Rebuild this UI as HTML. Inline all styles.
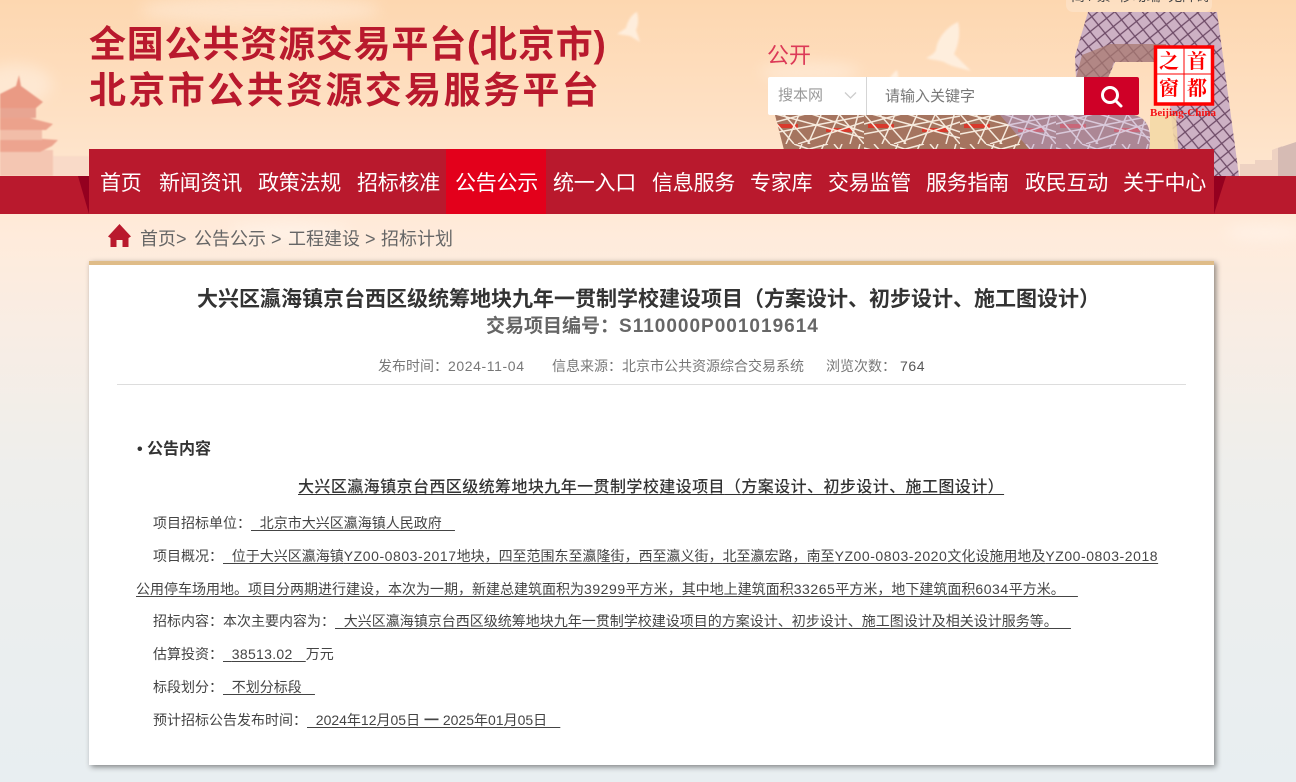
<!DOCTYPE html>
<html lang="zh-CN">
<head>
<meta charset="utf-8">
<title>公告公示</title>
<style>
html,body{margin:0;padding:0;}
body{width:1296px;height:782px;overflow:hidden;position:relative;font-family:"Liberation Sans","Noto Sans CJK SC",sans-serif;background:#e9eef1;text-spacing-trim:space-all;}
.a{position:absolute;white-space:nowrap;}
svg.bg{position:absolute;left:0;top:0;}
.t{font-weight:700;font-size:37px;line-height:44px;color:#b9192d;}
.n{top:169px;font-size:21px;line-height:30px;color:#fff;letter-spacing:-0.25px;}
.l{font-size:14px;line-height:20px;color:#444;}
.l u,.u{text-underline-offset:2px;}
.l u{word-spacing:.5px;}
.d{letter-spacing:.55px;}
i{font-style:normal;font-family:"Noto Sans CJK TC",sans-serif;line-height:0;}
i.w{font-family:"WenQuanYi Zen Hei",sans-serif;}
.logo{font-weight:700;color:#fe0000;font-size:20px;line-height:24px;font-family:"Liberation Serif","Noto Serif CJK SC",serif;}
</style>
</head>
<body>
<svg class="bg" width="1296" height="782" viewBox="0 0 1296 782">
<defs>
<linearGradient id="g" x1="0" y1="0" x2="0" y2="1">
<stop offset="0" stop-color="#fdd7b0"/>
<stop offset=".14" stop-color="#fee0c3"/>
<stop offset=".3" stop-color="#ffebdb"/>
<stop offset=".42" stop-color="#f8ede4"/>
<stop offset=".6" stop-color="#eeeeec"/>
<stop offset="1" stop-color="#e8eef1"/>
</linearGradient>
<filter id="b"><feGaussianBlur stdDeviation="7"/></filter>
<filter id="s"><feGaussianBlur stdDeviation=".7"/></filter>
<filter id="s2"><feGaussianBlur stdDeviation="1"/></filter>
<pattern id="lat" width="15" height="15" patternUnits="userSpaceOnUse" patternTransform="rotate(6)">
<rect width="15" height="15" fill="#cdb1c4"/>
<path d="M0 0L15 15M15 0L0 15" stroke="#6d4a66" stroke-width="1.3"/>
</pattern>
<pattern id="nest" width="96" height="36" patternUnits="userSpaceOnUse">
<rect width="96" height="36" fill="#a5745f"/>
<path d="M4 18H30M58 22H84" stroke="#d8392c" stroke-width="4"/>
<path d="M0 6L26 36M10 0L42 36M34 0L18 36M56 0L40 36M74 0L58 36M92 0L82 36M0 26L96 8M0 4L96 30M26 0L96 24M0 16L60 0M30 36L96 14M66 0L96 36" stroke="#f6eadd" stroke-width="1.5" fill="none"/>
</pattern>
</defs>
<rect width="1296" height="782" fill="url(#g)"/>
<g filter="url(#b)" fill="#fff" opacity=".3">
<ellipse cx="260" cy="10" rx="120" ry="14"/>
<ellipse cx="810" cy="72" rx="50" ry="10"/>
<ellipse cx="16" cy="84" rx="36" ry="20"/>
<ellipse cx="290" cy="232" rx="60" ry="10"/>
<ellipse cx="1265" cy="232" rx="40" ry="8"/>
</g>
<!-- temple -->
<g filter="url(#s)">
<rect x="53" y="156" width="36" height="20" fill="#f9dac8"/>
<rect x="0" y="150" width="53" height="26" fill="#f4c6b2"/>
<path d="M0 138H30L58 140L52 146L40 152H0Z" fill="#eda48f"/>
<rect x="0" y="128" width="42" height="12" fill="#f2bda8"/>
<path d="M0 116H22L53 124L46 130H0Z" fill="#eca28c"/>
<rect x="0" y="104" width="36" height="14" fill="#e8a592"/>
<path d="M19 75L21 86L43 102L36 108H0V94L16 86Z" fill="#ea9a84"/>
</g>
<!-- cctv -->
<path d="M1088 12H1217L1239 176H1178L1165 62H1115L1108 78H1076L1075 56Z" fill="url(#lat)"/>
<path d="M1082 55L1110 44H1166V62H1114L1108 78H1076Z" fill="#a87a70" opacity=".75"/>
<path d="M1150 115H1176L1180 176H1150Z" fill="#f3d8a4" opacity=".85"/>
<!-- buildings -->
<path d="M1240 176V164H1255V160H1272V150L1282 146V176Z" fill="#eed2c2"/>
<path d="M1278 148L1296 142V176H1278Z" fill="#d6bbb4"/>
<!-- nest -->
<path d="M775 115H1134C1148 118 1152 130 1149 150H784Z" fill="url(#nest)"/>
<path d="M1000 115H1134C1148 118 1152 130 1149 150H1030Z" fill="#b5a0d8" opacity=".45"/>
<!-- birds -->
<g fill="#fff3e6" opacity=".8" filter="url(#s2)">
<path d="M936 50C937 38 948 26 958 22C961 34 958 46 954 54C962 62 966 66 971 71C960 68 950 66 944 62C938 60 932 60 926 58C930 56 934 54 936 50Z"/>
<path d="M888 84C889 78 892 74 897 70C899 76 898 80 897 83L899 90L892 86L884 85Z"/>
<path d="M626 28C628 20 632 14 637 12C639 20 638 26 636 30L640 42L630 36L617 34Z"/>
</g>
<!-- band -->
<rect x="0" y="176" width="1296" height="38" fill="#b9192d"/>
<path d="M78 176H89V214Z" fill="#94001f"/>
<path d="M1214 176H1226L1214 214Z" fill="#94001f"/>
<rect x="89" y="149" width="1125" height="65" fill="#b9192d"/>
<rect x="446" y="149" width="100" height="65" fill="#e3001b"/>
<!-- top util -->
<rect x="1066" y="-8" width="146" height="20" rx="7" fill="#fff" opacity=".22"/>
<!-- card -->
<rect x="89" y="261" width="1125" height="504" fill="#fff" style="filter:drop-shadow(2px 2px 3px rgba(0,0,0,.45))"/>
<rect x="89" y="261" width="1125" height="4" fill="#dfbc88"/>
<rect x="117" y="384" width="1069" height="1" fill="#ddd"/>
<!-- logo -->
<rect x="1155.500" y="47" width="57" height="57" fill="#fff" stroke="#fe0000" stroke-width="3.500"/>
<path d="M1184 47V104M1156 74H1212" stroke="#fe0000" stroke-width="1" fill="none"/>
<!-- home -->
<path d="M119.500 224L131 236.500L128.500 238V247H122.500V240H116.500V247H110.500V238L108 236.500Z" fill="#b9192d"/>
<!-- search -->
<rect x="768" y="77" width="371" height="38" rx="2" fill="#fff"/>
<rect x="866" y="77" width="1" height="38" fill="#d5d5d5"/>
<path d="M1084 77H1137a2 2 0 0 1 2 2V113a2 2 0 0 1-2 2H1084Z" fill="#cf0027"/>
<circle cx="1110" cy="95" r="7.500" fill="none" stroke="#fff" stroke-width="3"/>
<path d="M1115.500 100.500L1121 106" stroke="#fff" stroke-width="3" stroke-linecap="round"/>
<path d="M845 92.500L850.500 98L856 92.500" fill="none" stroke="#ccc" stroke-width="1.300"/>
</svg>

<div class="a" style="left:1071px;top:-14px;font-size:14px;line-height:20px;color:#444;">简 / 繁 &nbsp;移动端 &nbsp;无障碍</div>

<div class="a t" style="left:89px;top:23px;letter-spacing:.8px;">全国公共资源交易平台(北京市)</div>
<div class="a t" style="left:89px;top:69px;letter-spacing:2.4px;">北京市公共资源交易服务平台</div>

<div class="a" style="left:767px;top:41px;font-size:22px;line-height:30px;color:#dc3a58;">公开</div>
<div class="a" style="left:778px;top:86px;font-size:15px;line-height:20px;color:#999;">搜本网</div>
<div class="a" style="left:885px;top:87px;font-size:15px;line-height:20px;color:#777;">请输入关键字</div>

<div class="a logo" style="left:1159px;top:50px;">之</div>
<div class="a logo" style="left:1187px;top:50px;">首</div>
<div class="a logo" style="left:1159px;top:77px;">窗</div>
<div class="a logo" style="left:1187px;top:77px;">都</div>
<div class="a" style="left:1150px;top:106px;font-size:11px;line-height:14px;font-weight:700;color:#f41212;font-family:'Liberation Serif',serif;">Beijing-China</div>

<div class="a n" style="left:100px;">首页</div>
<div class="a n" style="left:159px;">新闻资讯</div>
<div class="a n" style="left:258px;">政策法规</div>
<div class="a n" style="left:357px;">招标核准</div>
<div class="a n" style="left:455px;">公告公示</div>
<div class="a n" style="left:553px;">统一入口</div>
<div class="a n" style="left:652px;">信息服务</div>
<div class="a n" style="left:750px;">专家库</div>
<div class="a n" style="left:828px;">交易监管</div>
<div class="a n" style="left:926px;">服务指南</div>
<div class="a n" style="left:1025px;">政民互动</div>
<div class="a n" style="left:1123px;">关于中心</div>

<div class="a" style="left:140px;top:226px;font-size:18px;line-height:26px;color:#666;">首页&gt;</div>
<div class="a" style="left:194px;top:226px;font-size:18px;line-height:26px;color:#666;">公告公示 &gt;</div>
<div class="a" style="left:288px;top:226px;font-size:18px;line-height:26px;color:#666;">工程建设 &gt;</div>
<div class="a" style="left:381px;top:226px;font-size:18px;line-height:26px;color:#666;">招标计划</div>

<div class="a" style="left:197px;top:285px;font-size:21px;line-height:30px;font-weight:700;color:#333;">大兴区瀛海镇京台西区级统筹地块九年一贯制学校建设项目<i>（</i>方案设计、初步设计、施工图设计<i>）</i></div>
<div class="a" style="left:486px;top:313px;font-size:19px;line-height:28px;font-weight:700;color:#666;">交易项目编号<i>：</i><span style="letter-spacing:1px;">S110000P001019614</span></div>

<div class="a" style="left:378px;top:356px;font-size:14px;line-height:20px;color:#777;">发布时间<i>：</i><span style="letter-spacing:.6px;">2024-11-04</span></div>
<div class="a" style="left:552px;top:356px;font-size:14px;line-height:20px;color:#777;">信息来源<i>：</i>北京市公共资源综合交易系统</div>
<div class="a" style="left:826px;top:356px;font-size:14px;line-height:20px;color:#777;">浏览次数<i>：</i></div>
<div class="a" style="left:900px;top:356px;font-size:14px;line-height:20px;color:#555;letter-spacing:.6px;">764</div>

<div class="a" style="left:137px;top:438px;font-size:16px;line-height:24px;font-weight:700;color:#333;">• 公告内容</div>
<div class="a u" style="left:298px;top:476px;font-size:16px;line-height:24px;font-weight:500;color:#333;letter-spacing:.42px;text-decoration:underline;">大兴区瀛海镇京台西区级统筹地块九年一贯制学校建设项目<i>（</i>方案设计、初步设计、施工图设计<i>）</i></div>

<div class="a l" style="left:153px;top:513px;">项目招标单位<i>：</i><u>&nbsp; 北京市大兴区瀛海镇人民政府 &nbsp;&nbsp;</u></div>
<div class="a l" style="left:153px;top:546px;">项目概况<i>：</i><u>&nbsp; 位于大兴区瀛海镇<span class="d">YZ00-0803-2017</span>地块<i class="w">，</i>四至范围东至瀛隆街<i class="w">，</i>西至瀛义街<i class="w">，</i>北至瀛宏路<i class="w">，</i>南至<span class="d">YZ00-0803-2020</span>文化设施用地及<span class="d">YZ00-0803-2018</span></u></div>
<div class="a l" style="left:136px;top:579px;"><u>公用停车场用地。项目分两期进行建设<i class="w">，</i>本次为一期<i class="w">，</i>新建总建筑面积为<span class="d">39299</span>平方米<i class="w">，</i>其中地上建筑面积<span class="d">33265</span>平方米<i class="w">，</i>地下建筑面积<span class="d">6034</span>平方米。 &nbsp;&nbsp;</u></div>
<div class="a l" style="left:153px;top:611px;">招标内容<i>：</i>本次主要内容为<i>：</i><u>&nbsp; 大兴区瀛海镇京台西区级统筹地块九年一贯制学校建设项目的方案设计、初步设计、施工图设计及相关设计服务等。 &nbsp;&nbsp;</u></div>
<div class="a l" style="left:153px;top:644px;">估算投资<i>：</i><u>&nbsp; <span style="letter-spacing:.3px;">38513.02</span> &nbsp;&nbsp;</u>万元</div>
<div class="a l" style="left:153px;top:677px;">标段划分<i>：</i><u>&nbsp; 不划分标段 &nbsp;&nbsp;</u></div>
<div class="a l" style="left:153px;top:710px;">预计招标公告发布时间<i>：</i><u>&nbsp; 2024年12月05日 ━ 2025年01月05日 &nbsp;&nbsp;</u></div>
</body>
</html>
